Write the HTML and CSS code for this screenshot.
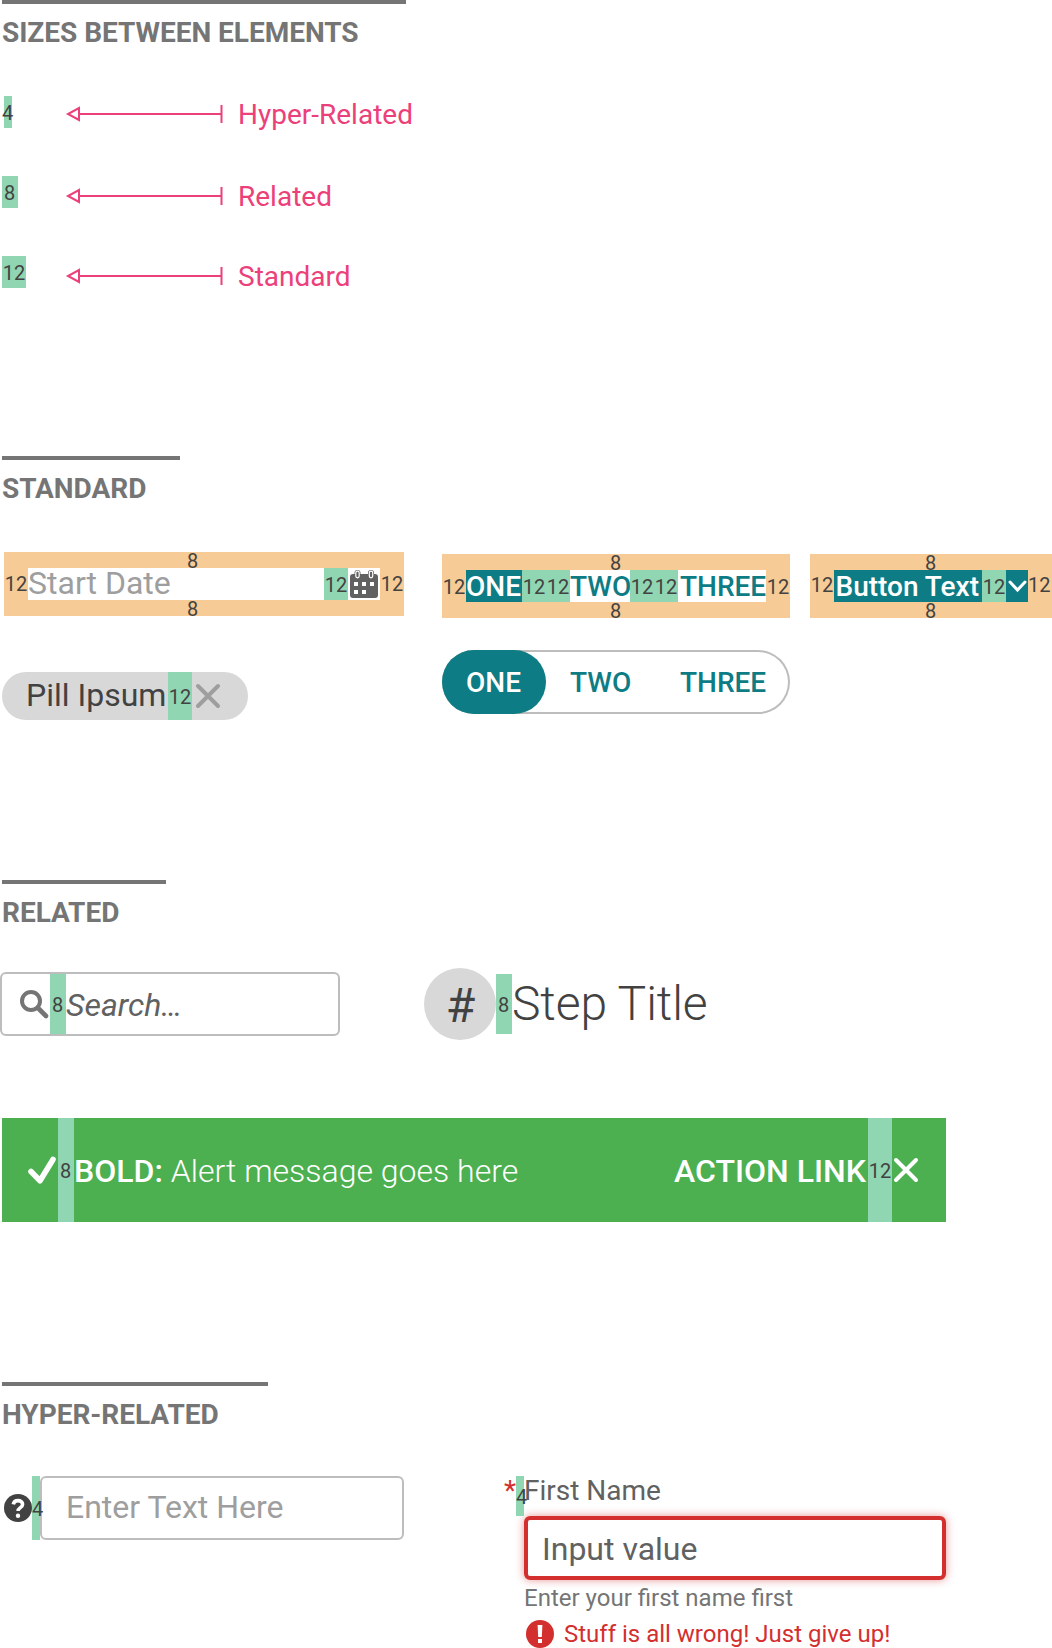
FILE: index.html
```html
<!DOCTYPE html>
<html lang="en">
<head>
<meta charset="utf-8">
<title>Sizes between elements</title>
<link rel="stylesheet" href="styles.css">
</head>
<body>
<main class="page">
  <section class="section section-sizes">
    <h2 class="heading w-sizes">SIZES BETWEEN ELEMENTS</h2>
    <div class="legend">
      <div class="legend-row">
        <div class="legend-size"><span class="gap gap-4">4</span></div>
        <svg class="arrow" width="160" height="20" viewBox="0 0 160 20"><path d="M15 10H157M157.5 1v18M15 4v12L4 10z"/></svg>
        <span class="legend-label">Hyper-Related</span>
      </div>
      <div class="legend-row legend-low">
        <div class="legend-size"><span class="gap gap-8">8</span></div>
        <svg class="arrow" width="160" height="20" viewBox="0 0 160 20"><path d="M15 10H157M157.5 1v18M15 4v12L4 10z"/></svg>
        <span class="legend-label">Related</span>
      </div>
      <div class="legend-row legend-low">
        <div class="legend-size"><span class="gap gap-12">12</span></div>
        <svg class="arrow" width="160" height="20" viewBox="0 0 160 20"><path d="M15 10H157M157.5 1v18M15 4v12L4 10z"/></svg>
        <span class="legend-label">Standard</span>
      </div>
    </div>
  </section>

  <section class="section section-standard">
    <h2 class="heading w-standard">STANDARD</h2>
    <div class="standard-grid">
      <div class="col-date">
        <div class="inset inset-date">
          <span class="pad pad-top">8</span>
          <span class="pad pad-left">12</span>
          <div class="inset-body date-body">
            <span class="date-text">Start Date</span>
            <span class="gap gap-12 gap-date">12</span>
            <svg class="calendar" width="32" height="32" viewBox="0 0 32 32">
              <rect x="2" y="6" width="28" height="24" rx="3" fill="#616161"/>
              <rect x="6.5" y="2" width="6" height="9" rx="3" fill="#616161"/>
              <rect x="20" y="2" width="6" height="9" rx="3" fill="#616161"/>
              <rect x="7.8" y="3.2" width="3.4" height="6.6" rx="1.7" fill="#616161" stroke="#fff" stroke-width="1.2"/>
              <rect x="21.3" y="3.2" width="3.4" height="6.6" rx="1.7" fill="#616161" stroke="#fff" stroke-width="1.2"/>
              <path d="M6 14h4v4H6zM14 14h4v4h-4zM22 14h4v4h-4zM6 22h4v4H6zM14 22h4v4h-4z" fill="#fff"/>
            </svg>
          </div>
          <span class="pad pad-right">12</span>
          <span class="pad pad-bottom">8</span>
        </div>
        <div class="pill">
          <span class="pill-text">Pill Ipsum</span>
          <span class="gap gap-12">12</span>
          <svg class="pill-close" width="32" height="32" viewBox="0 0 32 32"><path d="M6 6L26 26M26 6L6 26"/></svg>
        </div>
      </div>
      <div class="col-toggle">
        <div class="inset inset-toggle">
          <span class="pad pad-top">8</span>
          <span class="pad pad-left">12</span>
          <div class="inset-body">
            <span class="opt opt-one opt-active">ONE</span>
            <span class="gap gap-12">12</span><span class="gap gap-12">12</span>
            <span class="opt opt-two">TWO</span>
            <span class="gap gap-12">12</span><span class="gap gap-12">12</span>
            <span class="opt opt-three">THREE</span>
          </div>
          <span class="pad pad-right">12</span>
          <span class="pad pad-bottom">8</span>
        </div>
        <div class="toggle">
          <span class="toggle-active"><span class="opt opt-one">ONE</span></span>
          <span class="opt opt-two">TWO</span>
          <span class="opt opt-three">THREE</span>
        </div>
      </div>
      <div class="inset inset-button">
        <span class="pad pad-top">8</span>
        <span class="pad pad-left">12</span>
        <div class="inset-body button-body">
          <span class="button-text">Button Text</span>
          <span class="gap gap-12">12</span>
          <svg width="22" height="32" viewBox="0 0 22 32"><path class="chevron" d="M4 12l7.5 8L19 12"/></svg>
        </div>
        <span class="pad pad-right">12</span>
        <span class="pad pad-bottom">8</span>
      </div>
    </div>
  </section>

  <section class="section section-related">
    <h2 class="heading w-related">RELATED</h2>
    <div class="related-row">
      <div class="search">
        <svg class="search-icon" width="32" height="32" viewBox="0 0 32 32"><circle cx="13" cy="13" r="9" stroke-width="4"/><path d="M20 20l8 8" stroke-width="4.6" stroke-linecap="round"/></svg>
        <span class="gap gap-8">8</span>
        <span class="search-text">Search…</span>
      </div>
      <div class="step">
        <span class="step-badge">#</span>
        <span class="gap gap-8 gap-step">8</span>
        <span class="step-title">Step Title</span>
      </div>
    </div>
    <div class="alert">
      <svg class="alert-check" width="32" height="32" viewBox="0 0 32 32"><path d="M5 17.5l9 9.3L27 5.5"/></svg>
      <span class="gap gap-8">8</span>
      <span class="alert-text"><b class="alert-bold">BOLD:</b> <span class="alert-msg">Alert message goes here</span></span>
      <span class="alert-link">ACTION LINK</span>
      <span class="gap gap-12">12</span>
      <svg class="alert-close" width="28" height="32" viewBox="0 0 28 32"><path d="M4 6L24 26M24 6L4 26"/></svg>
    </div>
  </section>

  <section class="section section-hyper">
    <h2 class="heading w-hyper">HYPER-RELATED</h2>
    <div class="hyper-row">
      <div class="help-field">
        <svg class="help" width="28" height="28" viewBox="0 0 28 28"><circle cx="14" cy="14" r="14" fill="#424242"/><path d="M9.3 10.3C9.8 7.6 11.6 6.6 14 6.6c2.7 0 4.6 1.4 4.6 3.6 0 3.6-4.5 3.2-4.5 6.8" fill="none" stroke="#fff" stroke-width="3.6"/><circle cx="14" cy="21.7" r="2.2" fill="#fff"/></svg>
        <span class="gap gap-4 gap-help">4</span>
        <div class="text-input">Enter Text Here</div>
      </div>
      <div class="name-field">
        <div class="name-label"><span class="star">*</span><span class="gap gap-4 gap-name">4</span><span class="name-text">First Name</span></div>
        <div class="name-input">Input value</div>
        <div class="name-hint">Enter your first name first</div>
        <div class="name-error">
          <svg width="28" height="28" viewBox="0 0 28 28"><circle cx="14" cy="14" r="14" fill="#d32f2f"/><path d="M11.6 5h4.8l-.6 12h-3.6zM12 19h4v4h-4z" fill="#fff"/></svg>
          <span class="error-text">Stuff is all wrong! Just give up!</span>
        </div>
      </div>
    </div>
  </section>
</main>
</body>
</html>
```
FILE: styles.css
```css
* { box-sizing: border-box; }
html, body { margin: 0; }
body {
  font-family: Roboto, "Liberation Sans", sans-serif;
  background: #fff;
  color: #424242;
}
.page { width: 1052px; height: 1648px; overflow: hidden; white-space: nowrap; }
svg { display: block; flex: none; }

.section-sizes { height: 456px; }
.section-standard { height: 424px; }
.section-related { height: 502px; }

.heading {
  margin: 0 0 0 2px;
  padding-top: 12px;
  border-top: 4px solid #757575;
  color: #757575;
  font-size: 28px;
  font-weight: 700;
  line-height: 33px;
  letter-spacing: -.03px;
}
.w-sizes { width: 404px; }
.w-standard { width: 178px; }
.w-related { width: 164px; }
.w-hyper { width: 266px; }

/* Green spacer with its size */
.gap {
  display: flex;
  flex: none;
  align-items: center;
  justify-content: center;
  align-self: stretch;
  background: #90d6b2;
  color: #424242;
  font-size: 20px;
  line-height: 22px;
  padding-top: 2px;
}
.gap-4 { width: 8px; }
.gap-8 { width: 16px; padding-right: 1px; }
.gap-12 { width: 24px; }

/* Legend */
.legend { display: flex; flex-direction: column; gap: 48px; padding: 47px 0 0 2px; }
.legend-row { display: flex; align-items: center; height: 32px; }
.legend-size { display: flex; width: 62px; height: 32px; }
.legend-size .gap-4 { margin-left: 2px; padding-right: 1px; }
.arrow { margin: 4px 14px 0 0; fill: none; stroke: #ec407a; stroke-width: 2; }
.legend-label { padding-top: 5px; color: #ec407a; font-size: 28px; line-height: 32px; }
.legend-low .arrow { margin-top: 8px; }
.legend-low .legend-label { padding-top: 9px; }

/* Orange inset frames */
.inset {
  display: grid;
  grid-template-rows: 16px 32px 16px;
  background: #f7cb95;
}
.inset-date { width: 400px; grid-template-columns: 24px 352px 24px; }
.inset-toggle { width: 348px; grid-template-columns: 24px 300px 24px; }
.inset-button { width: 242px; grid-template-columns: 24px 194px 24px; }
.pad { font-size: 20px; text-align: center; line-height: 33px; }
.pad-top, .pad-bottom { grid-column: 1 / -1; padding-right: 1px; line-height: 19px; }
.inset-date .pad-top, .inset-date .pad-bottom { padding-right: 23px; }
.inset-toggle .pad-left, .inset-toggle .pad-right { line-height: 34px; }
.inset-button .pad-left, .inset-button .pad-right { line-height: 31px; }
.inset-button .pad-right { text-align: left; }
.inset-body { display: flex; height: 32px; background: #fff; }

.standard-grid { display: flex; align-items: flex-start; padding: 47px 0 0 2px; }
.col-date { width: 440px; }
.inset-date { margin-left: 2px; }
.date-text { flex: 1; color: #9e9e9e; font-size: 32px; line-height: 31px; }
.col-toggle { width: 368px; padding-top: 2px; }
.inset-button { margin-top: 2px; }

.pill {
  display: flex;
  align-items: center;
  width: 246px;
  height: 48px;
  margin-top: 56px;
  border-radius: 24px;
  background: #d8d8d8;
}
.pill-text { width: 166px; padding: 0 0 2px 24px; font-size: 32px; line-height: 46px; }
.pill-close { fill: none; stroke: #9e9e9e; stroke-width: 4; stroke-linecap: round; }

.opt { color: #0e7c84; font-size: 28px; font-weight: 500; line-height: 33px; }
.opt-one { width: 56px; color: #fff; }
.opt-active { background: #0e7c84; }
.opt-two { width: 60px; }
.opt-three { width: 88px; padding-left: 2px; }
.toggle {
  display: flex;
  align-items: center;
  width: 348px;
  height: 64px;
  margin-top: 32px;
  border-radius: 32px;
  box-shadow: inset 0 0 0 2px #bdbdbd;
}
.toggle-active { display: flex; align-items: center; width: 104px; height: 64px; padding-left: 24px; border-radius: 32px; background: #0e7c84; }
.toggle > .opt-two { margin: 0 48px 0 24px; }

.button-body { background: #0e7c84; }
.button-text { width: 148px; padding-left: 1.5px; color: #fff; font-size: 28px; font-weight: 500; line-height: 33px; }
.chevron { fill: none; stroke: #fff; stroke-width: 3; stroke-linecap: round; }

/* Related */
.related-row { display: flex; align-items: center; height: 72px; margin-top: 39px; }
.search {
  display: flex;
  align-items: center;
  width: 340px;
  height: 64px;
  margin-right: 84px;
  padding-left: 16px;
  border: 2px solid #bdbdbd;
  border-radius: 6px;
}
.search-icon { fill: none; stroke: #757575; }
.search-text { padding-top: 2px; font-size: 32px; font-style: italic; color: #616161; line-height: 60px; }
.step { display: flex; align-items: center; }
.step-badge { width: 72px; height: 72px; padding-left: 1px; border-radius: 50%; background: #d8d8d8; font-size: 48px; line-height: 76px; text-align: center; }
.gap-step { align-self: center; height: 60px; }
.step-title { font-size: 48px; font-weight: 300; line-height: 72px; letter-spacing: -.1px; }
.alert {
  display: flex;
  align-items: center;
  width: 944px;
  height: 104px;
  margin: 78px 0 0 2px;
  padding-left: 24px;
  background: #4caf50;
  color: #fff;
  font-size: 32px;
}
.alert-check { fill: none; stroke: #fff; stroke-width: 5.6; stroke-linecap: round; stroke-linejoin: round; }
.alert-text { flex: 1; padding-top: 2px; }
.alert-bold { font-weight: 500; }
.alert-msg { font-weight: 300; }
.alert-link { width: 194px; padding-top: 2px; font-weight: 500; }
.alert-close { margin-right: 26px; fill: none; stroke: #fff; stroke-width: 4; stroke-linecap: round; }

/* Hyper-related */
.hyper-row { display: flex; align-items: flex-start; justify-content: space-between; width: 946px; margin-top: 45px; padding-left: 4px; }
.help-field { display: flex; align-items: center; width: 400px; height: 64px; }
.gap-help, .gap-name { justify-content: flex-start; }
/* The digit is wider than its spacer and runs over the input's border */
.gap-help { z-index: 1; }
.text-input { flex: 1; height: 64px; padding-left: 24px; border: 2px solid #bdbdbd; border-radius: 6px; color: #9e9e9e; font-size: 32px; line-height: 59px; }
.name-field { width: 442px; }
.name-label { display: flex; height: 40px; color: #616161; font-size: 28px; line-height: 30px; }
.star { width: 12px; color: #d32f2f; }
.name-input {
  height: 64px;
  margin-left: 20px;
  padding-left: 14px;
  border: 4px solid #d32f2f;
  border-radius: 6px;
  box-shadow: 0 0 8px rgba(211, 47, 47, .5);
  color: #616161;
  font-size: 32px;
  line-height: 58px;
}
.name-hint { margin: 4px 0 0 20px; color: #757575; font-size: 24px; line-height: 28px; }
.name-error { display: flex; align-items: center; gap: 10px; margin: 8px 0 0 22px; color: #d32f2f; font-size: 24px; line-height: 28px; }
```
